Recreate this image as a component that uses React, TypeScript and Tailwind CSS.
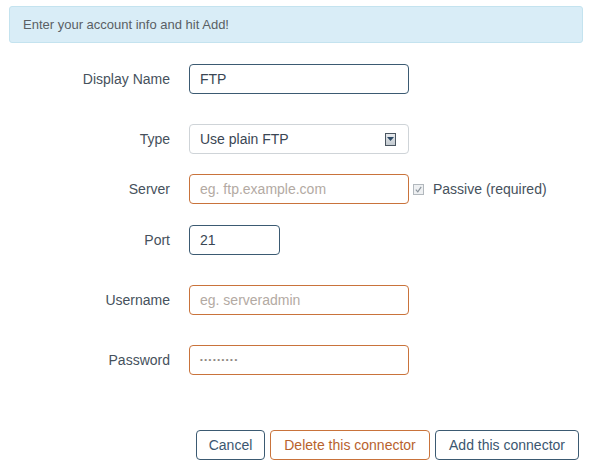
export default function App() {
    return (
        <div className="w-[592px] h-[466px] bg-white font-['Liberation_Sans',Arial,sans-serif] text-[14px] overflow-hidden">
            {/* Info banner */}
            <div className="mx-[9px] mt-[6px] h-[37px] flex items-center px-[13px] rounded-[3px] border border-[#c4e3ef] bg-[#d9edf7] text-[13px] text-[#5a5f64]">
                Enter your account info and hit Add!
            </div>

            {/* Form */}
            <div className="mt-[21px] flex flex-col">
                <Row label="Display Name">
                    <div className="w-[220px] h-[30px] flex items-center px-[10px] rounded-[4px] border border-[#3b5a72] text-[#3a4653]">
                        FTP
                    </div>
                </Row>

                <Row label="Type" className="mt-[30px]">
                    <div className="w-[220px] h-[30px] flex items-center justify-between pl-[10px] pr-[12px] rounded-[4px] border border-[#cfd4d8] text-[#3a4653]">
                        <span>Use plain FTP</span>
                        <span className="w-[11px] h-[13px] flex items-center justify-center border border-[#4a5560] bg-gradient-to-b from-[#e8ebee] to-[#c2c9cf]">
                            <svg width="7" height="4" viewBox="0 0 7 4">
                                <path d="M0 0h7L3.5 4z" fill="#2d4a66" />
                            </svg>
                        </span>
                    </div>
                </Row>

                <Row label="Server" className="mt-[20px]">
                    <div className="w-[220px] h-[30px] flex items-center px-[10px] rounded-[4px] border border-[#c9733b] text-[#b3aaa3]">
                        eg. ftp.example.com
                    </div>
                    <div className="ml-[4px] flex items-center text-[#46515c]">
                        <span className="w-[11px] h-[11px] flex items-center justify-center border border-[#b2b8bd] bg-[#eef0f2]">
                            <svg width="7" height="7" viewBox="0 0 7 7">
                                <path d="M0.8 3.6L2.8 5.8L6.2 0.8" stroke="#8d969e" strokeWidth="1.2" fill="none" />
                            </svg>
                        </span>
                        <span className="ml-[9px]">Passive (required)</span>
                    </div>
                </Row>

                <Row label="Port" className="mt-[21px]">
                    <div className="w-[91px] h-[30px] flex items-center px-[10px] rounded-[4px] border border-[#3b5a72] text-[#3a4653]">
                        21
                    </div>
                </Row>

                <Row label="Username" className="mt-[30px]">
                    <div className="w-[220px] h-[30px] flex items-center px-[10px] rounded-[4px] border border-[#c9733b] text-[#b3aaa3]">
                        eg. serveradmin
                    </div>
                </Row>

                <Row label="Password" className="mt-[30px]">
                    <div className="w-[220px] h-[30px] flex items-center px-[10px] rounded-[4px] border border-[#c9733b] text-[#8e8680] text-[8px] tracking-[1.5px]">
                        •••••••••
                    </div>
                </Row>
            </div>

            {/* Buttons */}
            <div className="mt-[55px] mr-[13px] flex justify-end gap-[5px]">
                <button className="w-[69px] h-[30px] rounded-[4px] border border-[#3b5a72] text-[#3b5670]">
                    Cancel
                </button>
                <button className="w-[160px] h-[30px] rounded-[4px] border border-[#c9733b] text-[#b8622d]">
                    Delete this connector
                </button>
                <button className="w-[144px] h-[30px] rounded-[4px] border border-[#3b5a72] text-[#3b5670]">
                    Add this connector
                </button>
            </div>
        </div>
    );
}

function Row({ label, className = "", children }: { label: string; className?: string; children: React.ReactNode }) {
    return (
        <div className={`flex items-center ${className}`}>
            <div className="w-[170px] text-right text-[#46515c]">{label}</div>
            <div className="ml-[19px] flex items-center">{children}</div>
        </div>
    );
}
